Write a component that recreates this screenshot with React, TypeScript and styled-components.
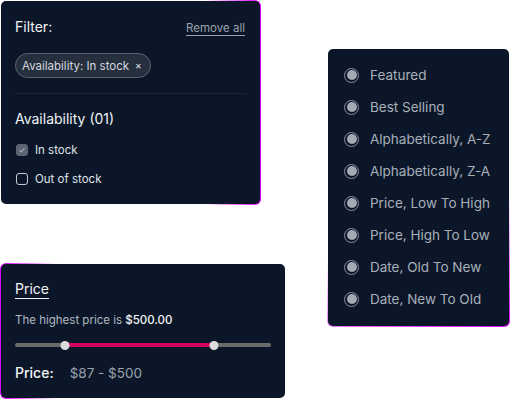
import React from "react";
import styled, { createGlobalStyle } from "styled-components";

const GlobalStyle = createGlobalStyle`
    html, body {
        margin: 0;
        padding: 0;
        background: #ffffff;
    }
    body {
        font-family: Inter, "Noto Sans", sans-serif;
        -webkit-font-smoothing: antialiased;
    }
`;

const BG = "#0b1729";
const GLOW = "#dd00ff";

const Page = styled.div`
    display: flex;
    align-items: flex-start;
    width: 510px;
    height: 399px;
    overflow: hidden;
`;

const LeftColumn = styled.div`
    display: flex;
    flex-direction: column;
    gap: 58px;
`;

const Panel = styled.div<{ $glow: string; $w: number; $h: number }>`
    box-sizing: border-box;
    width: ${(p) => p.$w}px;
    height: ${(p) => p.$h}px;
    border: 1px solid transparent;
    border-radius: 6px;
    background: linear-gradient(${BG}, ${BG}) padding-box,
        linear-gradient(${(p) => p.$glow}) border-box;
    color: #ffffff;
`;

const FilterBody = styled.div`
    padding: 17px 14px 0 14px;
`;

const HeadRow = styled.div`
    display: flex;
    justify-content: space-between;
    align-items: baseline;
    padding-right: 1px;
`;

const Title = styled.div<{ $underline?: boolean }>`
    font-size: 14px;
    font-weight: 400;
    color: #f1f3f6;
    text-decoration: ${(p) => (p.$underline ? "underline" : "none")};
    text-underline-offset: 4px;
    text-decoration-thickness: 1px;
`;

const RemoveLink = styled.a`
    font-size: 11.5px;
    color: #9aa1ac;
    text-decoration: underline;
    text-underline-offset: 3px;
    cursor: pointer;
`;

const Chip = styled.div`
    display: inline-flex;
    align-items: center;
    gap: 6px;
    margin-top: 18px;
    height: 25px;
    box-sizing: border-box;
    padding: 0 8px 0 6px;
    border: 1px solid #5a6372;
    border-radius: 13px;
    background: #262f3e;
    font-size: 11.5px;
    color: #d5d9df;
`;

const ChipX = styled.span`
    font-size: 8px;
    color: #e4e7eb;
`;

const Divider = styled.div`
    height: 1px;
    background: #1b2738;
    margin: 15px 0 16px 0;
`;

const CheckList = styled.div`
    display: flex;
    flex-direction: column;
    gap: 12px;
    margin-top: 14px;
`;

const CheckRow = styled.label`
    display: flex;
    align-items: center;
    gap: 7px;
    font-size: 11.5px;
    color: #dfe3e8;
    height: 17px;
`;

const Box = styled.span<{ $checked?: boolean }>`
    box-sizing: border-box;
    width: 12px;
    height: 12px;
    border-radius: 3px;
    border: 1px solid ${(p) => (p.$checked ? "#5d6573" : "#c8ccd2")};
    background: ${(p) => (p.$checked ? "#5d6573" : "transparent")};
    display: inline-flex;
    align-items: center;
    justify-content: center;
    margin-left: 1px;
`;

const SortList = styled.div`
    display: flex;
    flex-direction: column;
    padding: 17px 0 0 16px;
    gap: 14px;
`;

const SortRow = styled.div`
    display: flex;
    align-items: center;
    gap: 11px;
    height: 18px;
    font-size: 13.5px;
    color: #a9afb9;
`;

const Radio = styled.span`
    box-sizing: border-box;
    width: 15px;
    height: 15px;
    border-radius: 50%;
    border: 1px solid #8b929d;
    display: inline-flex;
    align-items: center;
    justify-content: center;
    &::after {
        content: "";
        width: 10px;
        height: 10px;
        border-radius: 50%;
        background: #a4aab4;
    }
`;

const PriceBody = styled.div`
    padding: 16px 14px 0 14px;
`;

const Note = styled.div`
    margin-top: 16px;
    font-size: 11.5px;
    color: #b2b8c1;
    b {
        font-weight: 500;
        color: #f2f4f6;
    }
`;

const Track = styled.div`
    position: relative;
    margin-top: 16px;
    height: 4px;
    border-radius: 2px;
    background: #6a6a6a;
`;

const Range = styled.div`
    position: absolute;
    top: 0;
    height: 4px;
    background: #d2045f;
`;

const Thumb = styled.div`
    position: absolute;
    top: -2.5px;
    width: 9px;
    height: 9px;
    border-radius: 50%;
    background: #dcdcdc;
    transform: translateX(-50%);
`;

const PriceRow = styled.div`
    display: flex;
    align-items: baseline;
    gap: 16px;
    margin-top: 17px;
`;

const PriceLabel = styled.span`
    font-size: 14px;
    font-weight: 500;
    color: #f3f5f7;
`;

const PriceValue = styled.span`
    font-size: 13.5px;
    color: #9aa1ac;
`;

const SortWrap = styled.div`
    margin-left: 41px;
    margin-top: 48px;
`;

const sorts = [
    "Featured",
    "Best Selling",
    "Alphabetically, A-Z",
    "Alphabetically, Z-A",
    "Price, Low To High",
    "Price, High To Low",
    "Date, Old To New",
    "Date, New To Old",
];

const minPct = 19.5;
const maxPct = 77.8;

export default function App() {
    return (
        <>
            <GlobalStyle />
            <Page>
                <LeftColumn>
                    <Panel
                        $w={261}
                        $h={205}
                        $glow={`to right, transparent 78%, ${GLOW}`}
                    >
                        <FilterBody>
                            <HeadRow>
                                <Title>Filter:</Title>
                                <RemoveLink>Remove all</RemoveLink>
                            </HeadRow>
                            <Chip>
                                Availability: In stock <ChipX>✕</ChipX>
                            </Chip>
                            <Divider />
                            <Title>Availability (01)</Title>
                            <CheckList>
                                <CheckRow>
                                    <Box $checked>
                                        <svg width="8" height="8" viewBox="0 0 8 8">
                                            <path
                                                d="M1.5 4.2 L3.2 5.8 L6.5 2.3"
                                                fill="none"
                                                stroke="#c9ced6"
                                                strokeWidth="1"
                                            />
                                        </svg>
                                    </Box>
                                    In stock
                                </CheckRow>
                                <CheckRow>
                                    <Box />
                                    Out of stock
                                </CheckRow>
                            </CheckList>
                        </FilterBody>
                    </Panel>
                    <Panel
                        $w={286}
                        $h={136}
                        $glow={`to left, transparent 80%, ${GLOW}`}
                    >
                        <PriceBody>
                            <Title $underline>Price</Title>
                            <Note>
                                The highest price is <b>$500.00</b>
                            </Note>
                            <Track>
                                <Range
                                    style={{
                                        left: `${minPct}%`,
                                        width: `${maxPct - minPct}%`,
                                    }}
                                />
                                <Thumb style={{ left: `${minPct}%` }} />
                                <Thumb style={{ left: `${maxPct}%` }} />
                            </Track>
                            <PriceRow>
                                <PriceLabel>Price:</PriceLabel>
                                <PriceValue>$87 - $500</PriceValue>
                            </PriceRow>
                        </PriceBody>
                    </Panel>
                </LeftColumn>
                <SortWrap>
                    <Panel
                        $w={183}
                        $h={279}
                        $glow={`160deg, transparent 62%, ${GLOW}`}
                    >
                        <SortList>
                            {sorts.map((s) => (
                                <SortRow key={s}>
                                    <Radio />
                                    {s}
                                </SortRow>
                            ))}
                        </SortList>
                    </Panel>
                </SortWrap>
            </Page>
        </>
    );
}
